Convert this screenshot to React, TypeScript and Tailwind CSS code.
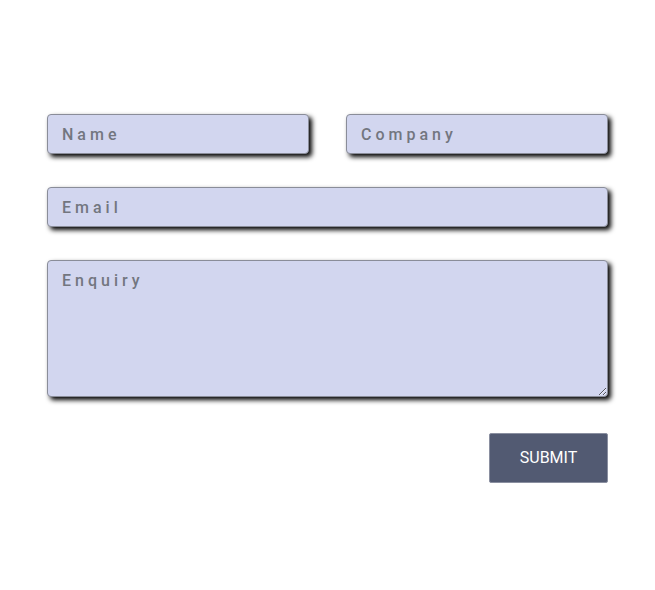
export default function App() {
  const field =
    "w-full h-10 rounded-[4px] border border-[#8a8d99] bg-[#d2d6ef] px-[14px] text-base tracking-[4px] text-[#333] placeholder:text-[#73767f] font-medium outline-none shadow-[3px_3px_5px_#000]";

  return (
    <div className="min-h-[590px] bg-white" style={{ fontFamily: "Roboto, 'Liberation Sans', sans-serif" }}>
      <form className="mx-auto w-[561px] pt-[114px] flex flex-col">
        <div className="grid grid-cols-2 gap-[37px]">
          <input className={field} placeholder="Name" />
          <input className={field} placeholder="Company" />
        </div>
        <input className={field + " mt-[33px]"} placeholder="Email" />
        <textarea
          className="mt-[33px] w-full h-[137px] rounded-[4px] border border-[#8a8d99] bg-[#d2d6ef] px-[14px] py-[8px] text-base tracking-[4px] text-[#333] placeholder:text-[#73767f] font-medium outline-none shadow-[3px_3px_5px_#000]"
          placeholder="Enquiry"
        />
        <div className="mt-[36px] flex justify-end">
          <button
            type="button"
            className="w-[119px] h-[50px] rounded-[2px] border border-[#8a8fa0] bg-[#525a72] text-white text-base"
          >
            SUBMIT
          </button>
        </div>
      </form>
    </div>
  );
}
